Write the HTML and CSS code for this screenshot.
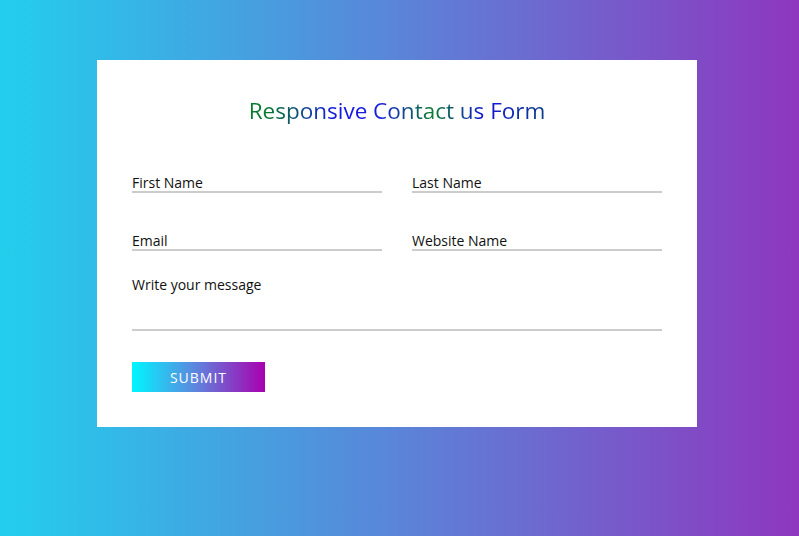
FILE: index.html
```html
<!DOCTYPE html>
<html lang="en">
<head>
<meta charset="utf-8">
<title>Responsive Contact us Form</title>
<link rel="stylesheet" href="styles.css">
</head>
<body>
<div class="page">
  <form class="card">
    <h2 class="title">Responsive Contact us Form</h2>
    <div class="row row-first">
      <div class="field"><span>First Name</span></div>
      <div class="field"><span>Last Name</span></div>
    </div>
    <div class="row row-second">
      <div class="field"><span>Email</span></div>
      <div class="field"><span>Website Name</span></div>
    </div>
    <div class="field message"><span>Write your message</span></div>
    <button type="button" class="submit">SUBMIT</button>
  </form>
</div>
</body>
</html>
```
FILE: styles.css
```css
* { box-sizing: border-box; }
html, body { margin: 0; height: 100%; }
body {
  font-family: "Open Sans", "Noto Sans", sans-serif;
  background: linear-gradient(to right, #23ceed 0%, #5b84d8 50%, #8e37bf 100%);
}
.page {
  padding: 60px 0 0 97px;
}
.card {
  width: 600px;
  background: #fff;
  padding: 37px 35px 35px;
  display: flex;
  flex-direction: column;
}
.title {
  margin: 0;
  font-size: 22.5px;
  font-weight: 500;
  line-height: 28px;
  text-align: center;
  align-self: center;
  background: linear-gradient(to right, #077a2c 6%, #1616e8 30%, #1620d8 45%, #0a7d2e 62%, #1414d8 80%, #0b3f88 100%);
  -webkit-background-clip: text;
  background-clip: text;
  color: transparent;
}
.row {
  display: grid;
  grid-template-columns: 250px 250px;
  gap: 30px;
}
.row-first { margin-top: 50px; }
.row-second { margin-top: 40px; }
.field {
  font-size: 14px;
  line-height: 16px;
  color: #111;
  border-bottom: 2px solid #cccccc;
}
.message {
  margin-top: 26px;
  height: 54px;
}
.submit {
  margin-top: 31px;
  width: 133px;
  height: 30px;
  border: 0;
  padding: 0;
  font-family: inherit;
  font-size: 14px;
  letter-spacing: 1px;
  color: #fff;
  background: linear-gradient(to right, #00f6ff 0%, #5a8ce0 45%, #a900b0 100%);
  cursor: pointer;
}
```
